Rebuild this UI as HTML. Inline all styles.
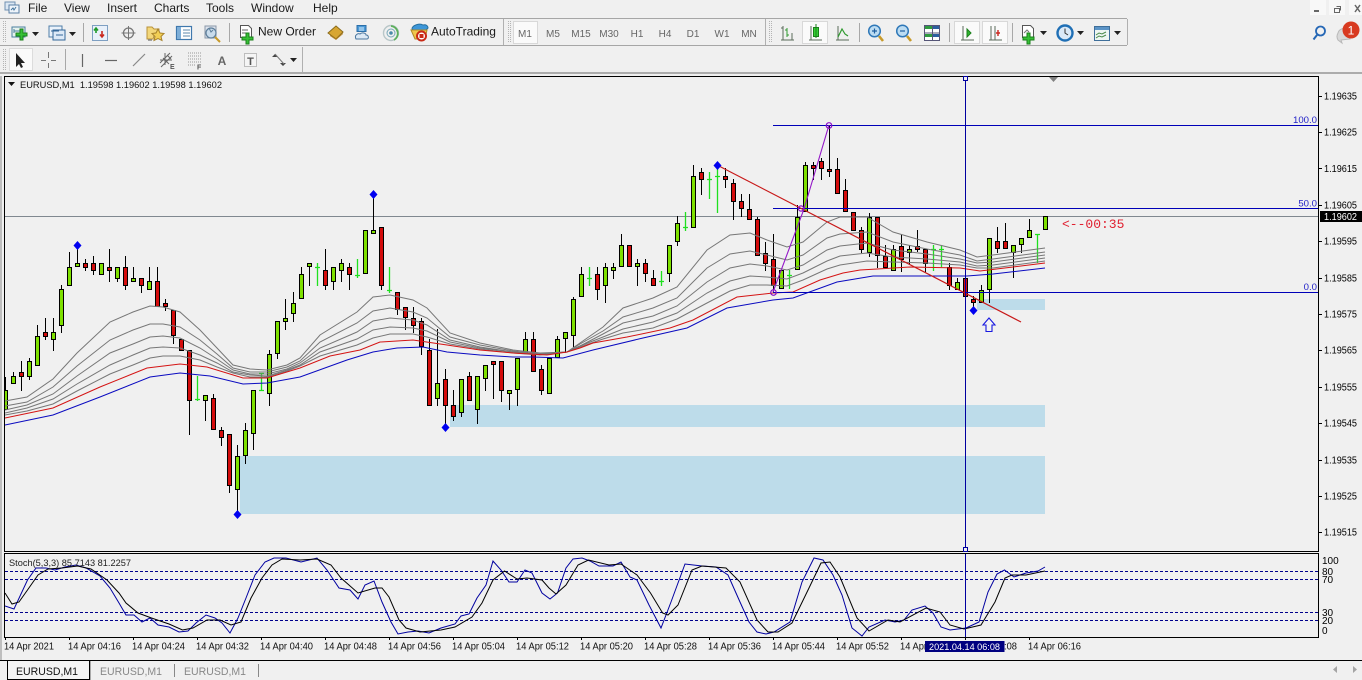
<!DOCTYPE html>
<html lang="en"><head><meta charset="utf-8"><title>EURUSD,M1</title>
<style>
html,body{margin:0;padding:0;background:#f0f0f0;width:1362px;height:680px;overflow:hidden}
svg{display:block}
text{font-family:"Liberation Sans",sans-serif;}
.menu{font-size:12px;fill:#1a1a1a}
.tf{font-size:10px;fill:#666;text-anchor:middle}
.p{font-size:10px;fill:#000}
.t{font-size:10px;fill:#111}
.lv{font-size:10px;fill:#000}
.fib{font-size:9.6px;fill:#2222c8;text-anchor:end}
</style></head><body>
<svg width="1362" height="680" viewBox="0 0 1362 680" xmlns="http://www.w3.org/2000/svg">
<defs><clipPath id="c"><rect x="5" y="77" width="1313" height="474"/></clipPath><clipPath id="s"><rect x="5" y="554" width="1313" height="83"/></clipPath></defs>
<rect width="1362" height="680" fill="#f0f0f0"/>

<!-- menu -->
<g fill="none"><rect x="5" y="2" width="10" height="8" fill="#dbe7f3" stroke="#6f8fb0"/><rect x="9" y="5" width="10" height="8" fill="#eef4fa" stroke="#5b7fa5"/><path d="M11 10l2-2 1 2 2-3" stroke="#46769f"/></g>
<text class="menu" x="28" y="12">File</text><text class="menu" x="64" y="12">View</text><text class="menu" x="107" y="12">Insert</text><text class="menu" x="154" y="12">Charts</text><text class="menu" x="206" y="12">Tools</text><text class="menu" x="251" y="12">Window</text><text class="menu" x="313" y="12">Help</text>
<!-- window controls -->
<rect x="1310" y="0" width="16" height="15" fill="#f8f8f8"/><rect x="1329" y="0" width="16" height="15" fill="#f8f8f8"/><rect x="1349" y="0" width="13" height="15" fill="#f8f8f8"/>
<path d="M1314 11h5" stroke="#666" stroke-width="2"/><path d="M1334.500 8.500h5v4h-5zM1336.500 6.500h4v4" fill="none" stroke="#666"/><path d="M1355 5l5 7m0-7l-5 7" stroke="#666" stroke-width="1.500"/>

<!-- toolbar structure -->
<path d="M0 18.500H1127M0 45.500H1127" stroke="#a6a6a6"/>
<path d="M503.500 19V45M765.500 19V45M1127.500 19V45M302.500 47V72" stroke="#b0b0b0"/>
<path d="M0 73H1362" stroke="#969696" stroke-width="1.600"/>
<g stroke="#b4b4b4" stroke-dasharray="1 1"><path d="M3.500 21V43M5.500 21V43M508.500 21V43M510.500 21V43M769.500 21V43M771.500 21V43M3.500 49V70M5.500 49V70"/></g>
<path d="M83.500 23V42M229.500 23V42M859.500 23V42M949.500 23V42M1012.500 23V42M65.500 49V70" stroke="#a8a8a8"/>

<!-- row1 left -->
<rect x="12" y="27" width="13" height="10" fill="#e6f2ee" stroke="#4a7f9f"/><path d="M14.500 31h8M14 29v4M23 29v4" stroke="#4a7f9f" fill="none"/>
<path d="M20 29h3v4h4v3h-4v4h-3v-4h-4v-3h4z" fill="#35c135" stroke="#1a7f1a"/>
<path d="M32 32h7l-3.500 4z" fill="#222"/>
<rect x="49" y="26" width="13" height="11" fill="#eaf2fb" stroke="#4f7ea8"/><rect x="53" y="30" width="12" height="10" fill="#dce9f7" stroke="#35689a"/><path d="M51 31h8M56 35h7" stroke="#35689a"/>
<path d="M69 32h7l-3.500 4z" fill="#222"/>
<rect x="92.500" y="25.500" width="15" height="15" fill="#e8f0fa" stroke="#7e9fc2"/><path d="M96 33v-4m-2 1.500l2-2.500 2 2.500" stroke="#1f9a2a" stroke-width="1.600" fill="none"/><path d="M102 31v5m-2-1.500l2 2.500 2-2.500" stroke="#c9281f" stroke-width="1.600" fill="none"/>
<circle cx="128.500" cy="33" r="5" fill="none" stroke="#777" stroke-width="1.300"/><path d="M128.500 26v14M121.500 33h14" stroke="#777"/>
<path d="M147 27h5l2 2h5v4h-4l-2 6h-6z" fill="#f3d77a" stroke="#b8923a"/><path d="M158 29l2 4 4 .5-3 3 1 4-4-2-4 2 1-4-3-3 4-.5z" fill="#f2cf55" stroke="#a8822a"/><path d="M149 39v2m2-2v2" stroke="#555"/>
<rect x="176.500" y="26.500" width="15" height="13" fill="#fff" stroke="#3f78ad" stroke-width="1.200"/><path d="M177 27h4v12h-4z" fill="#7daed8"/><path d="M183 30h7M183 33h7M183 36h7" stroke="#5d88ad"/>
<rect x="205" y="26" width="11" height="12" fill="#dde3ec" stroke="#8a97a8"/><circle cx="211" cy="33" r="5" fill="#c9dcec" stroke="#5f7f9b" stroke-width="1.200"/><path d="M215 37l5 5" stroke="#c79a2a" stroke-width="2"/><path d="M209 28l2 4 2-2" stroke="#5f7f9b" fill="none"/>

<path d="M240.500 25.500h8l3 3v9h-11z" fill="#fff" stroke="#555"/><path d="M242 30h6M242 33h7" stroke="#666"/>
<path d="M246 33h3v4h4v3h-4v4h-3v-4h-4v-3h4z" fill="#35c135" stroke="#1a7f1a"/>
<text x="258" y="35.500" font-size="12" fill="#1a1a1a">New Order</text>
<path d="M328 33l8-7 7 6-7 7z" fill="#d8a632" stroke="#8a6b1b"/><path d="M330 35l6 4 7-6v1l-7 6-6-4z" fill="#b9852a"/>
<path d="M357 25.500h9v6h-9z" fill="#4b9ad8" stroke="#2b6ea8"/><path d="M359 28h5M359 30h5" stroke="#d8ecfa"/><path d="M356 39c-2-4 2-6 4-5 2-2 6-1 6 1 3 0 3 4 1 4z" fill="#dce9f5" stroke="#4c78a0"/>
<circle cx="391" cy="33" r="7.500" fill="none" stroke="#b8c6c8" stroke-width="1.400"/><path d="M391 26a7.500 7.500 0 0 1 3 14" fill="none" stroke="#5cb05c" stroke-width="1.800"/><circle cx="391" cy="33" r="4" fill="none" stroke="#78a8b8"/><circle cx="391" cy="33" r="1.800" fill="#4a8aa8"/>
<path d="M412 29c0-4 8-6 11-4 3-1 5 1 5 3l-3 3h-10z" fill="#3d97d9" stroke="#27709f"/><path d="M411 30l16 0-2 9h-10z" fill="#f0c54a" stroke="#b08a28"/><circle cx="421.500" cy="36" r="4.500" fill="#fff" stroke="#c92a16" stroke-width="2"/><rect x="419.500" y="34" width="4" height="4" fill="#c92a16"/>
<text x="431" y="35.500" font-size="12" fill="#1a1a1a">AutoTrading</text>

<!-- timeframe -->
<rect x="513.500" y="21.500" width="24" height="22" fill="#fafafa" stroke="#d8d8d8"/>
<text class="tf" x="525" y="37">M1</text><text class="tf" x="553" y="37">M5</text><text class="tf" x="581" y="37">M15</text><text class="tf" x="609" y="37">M30</text><text class="tf" x="637" y="37">H1</text><text class="tf" x="665" y="37">H4</text><text class="tf" x="693" y="37">D1</text><text class="tf" x="722" y="37">W1</text><text class="tf" x="749" y="37">MN</text>

<!-- chart group -->
<rect x="802.500" y="21.500" width="25" height="22" fill="#fafafa" stroke="#d8d8d8"/><rect x="954.500" y="21.500" width="25" height="22" fill="#fafafa" stroke="#d8d8d8"/><rect x="982.500" y="21.500" width="25" height="22" fill="#fafafa" stroke="#d8d8d8"/>
<g fill="none" stroke="#5a6b5a"><path d="M781 40h13M783 26v14M781 28h2M792 40V33"/></g><path d="M787 28v9M785 30h2M787 35h2" stroke="#2f9a2f" fill="none"/>
<g fill="none" stroke="#5a6b5a"><path d="M809 40h13M811 26v14"/></g><rect x="813.500" y="27.500" width="5" height="9" fill="#35d035" stroke="#1a7f1a"/><path d="M816 24v14" stroke="#1a7f1a"/>
<g fill="none"><path d="M836 40h13M838 26v14" stroke="#5a6b5a"/><path d="M838 37l4-8 3 5 3 2" stroke="#2f9a2f" stroke-width="1.200"/></g>
<circle cx="874.500" cy="31" r="5.800" fill="#bcdcf2" stroke="#2f78b8" stroke-width="1.500"/><path d="M872 31h5M874.500 28.500v5" stroke="#1f5f9f" stroke-width="1.200"/><path d="M879 36l4 5" stroke="#c79a2a" stroke-width="2.600"/>
<circle cx="902.500" cy="31" r="5.800" fill="#bcdcf2" stroke="#2f78b8" stroke-width="1.500"/><path d="M900 31h5" stroke="#1f5f9f" stroke-width="1.200"/><path d="M907 36l4 5" stroke="#c79a2a" stroke-width="2.600"/>
<rect x="924.500" y="25.500" width="15" height="15" fill="#fff" stroke="#557"/><rect x="925" y="26" width="7" height="3" fill="#2f9a3f"/><rect x="933" y="26" width="6" height="3" fill="#2c5f9f"/><rect x="925" y="34" width="7" height="3" fill="#2f9a3f"/><rect x="933" y="34" width="6" height="3" fill="#2c5f9f"/><path d="M932.500 26v14M925 33h14" stroke="#557"/>
<g fill="none" stroke="#5a6b5a"><path d="M961 40h13M963 26v14"/></g><path d="M967 29l4 4-4 4z" fill="#2fb52f" stroke="#1a7f1a"/>
<g fill="none" stroke="#5a6b5a"><path d="M989 40h13M991 26v14M995 26v14"/></g><path d="M996 33h4M998 30v6" stroke="#c9281f" stroke-width="1.400"/>
<path d="M1022.500 25.500h8l3 3v9h-11z" fill="#fff" stroke="#555"/><path d="M1024 33l3-3 2 2" stroke="#777" fill="none"/>
<path d="M1027 33h3v4h4v3h-4v4h-3v-4h-4v-3h4z" fill="#35c135" stroke="#1a7f1a"/>
<path d="M1040 31h7l-3.500 4z" fill="#222"/>
<circle cx="1065" cy="33" r="7.500" fill="#dbe9f7" stroke="#1f6fb5" stroke-width="2.400"/><path d="M1065 28.500v4.500l3 2" stroke="#333" fill="none"/>
<path d="M1077 31h7l-3.500 4z" fill="#222"/>
<rect x="1094.500" y="26.500" width="15" height="14" fill="#eef6f2" stroke="#3f6f9a"/><rect x="1095" y="27" width="14" height="3" fill="#5b94c7"/><path d="M1096 35l3-2 3 1 4-2M1096 38l3-2 3 1 4-2" stroke="#4a8a4a" fill="none"/>
<path d="M1114 31h7l-3.500 4z" fill="#222"/>
<circle cx="1320.500" cy="31" r="4.500" fill="none" stroke="#2567b5" stroke-width="1.800"/><path d="M1317 35l-3.500 4.500" stroke="#2567b5" stroke-width="2"/>
<path d="M1338 33a6 6 0 0 1 8-4l4 10-9 1 1 3-4-3a7 7 0 0 1 0-7z" fill="#d9d9d9" stroke="#b8b8b8"/>
<circle cx="1351" cy="30" r="8.500" fill="#d83a20"/><text x="1351" y="34.500" font-size="12" fill="#fff" text-anchor="middle">1</text>

<!-- row 2 -->
<rect x="9.500" y="48.500" width="23" height="22" fill="#fafafa" stroke="#dcdcdc"/>
<path d="M16 53v14l3-3 2 4 2-1-2-4h4z" fill="#222"/>
<path d="M48.500 52v6M48.500 63v5M41 60.500h5M51 60.500h5" stroke="#777"/>
<path d="M82.500 54v13" stroke="#666" stroke-width="1.200"/>
<path d="M105 60.500h12" stroke="#666" stroke-width="1.200"/>
<path d="M133 66l12-12" stroke="#888" stroke-width="1.200"/>
<path d="M160 63l10-10M161 67l11-11M163 58l6 6M167 55l4 4M165 53v12M160 60h12" stroke="#666" fill="none"/><text x="170" y="69" font-size="7" font-weight="bold" fill="#555">E</text>
<path d="M188 53h13M188 56h13M188 59h13M188 62h13M188 65h8" stroke="#999" stroke-dasharray="1 1"/><text x="197" y="69.500" font-size="7" font-weight="bold" fill="#555">F</text>
<text x="222" y="65" font-size="12" font-weight="bold" fill="#666" text-anchor="middle">A</text>
<rect x="244.500" y="53.500" width="12" height="13" fill="#f5f5f5" stroke="#888" stroke-dasharray="1 1"/><text x="250.500" y="65" font-size="11" font-weight="bold" fill="#555" text-anchor="middle">T</text>
<path d="M272 57l3-3 3 3zM280 63l3 3 3-3z" fill="#444"/><path d="M275 54l9 10" stroke="#777"/><path d="M290 58h7l-3.500 4z" fill="#222"/>

<!-- chart frame -->
<path d="M1 76V660" stroke="#a8a8a8" stroke-width="1.400"/>
<rect x="4.500" y="76.500" width="1314" height="475" fill="#f0f0f0" stroke="#000"/>
<rect x="4.500" y="553.500" width="1314" height="84" fill="#f0f0f0" stroke="#000"/>

<g clip-path="url(#c)">
<!-- zones -->
<rect x="240" y="456" width="805" height="58" fill="#bddcea"/>
<rect x="450" y="405" width="595" height="22" fill="#bddcea"/>
<rect x="977" y="299" width="68" height="11" fill="#bddcea"/>
<!-- price line -->
<path d="M5 216.500H1318" stroke="#808890"/>

<!-- wicks -->
<path stroke="#000" fill="none" d="M5.500 377V410M13.500 372V376M21.500 361V391M29.500 358V380M37.500 325V336M45.500 318V340M53.500 318V351M61.500 285V333M69.500 252V267M77.500 245V263M85.500 259V271M93.500 256V275M109.500 249V282M117.500 279V282M125.500 256V290M133.500 267V278M141.500 286V293M149.500 267V281M157.500 267V281M165.500 299V311M173.500 336V344M189.500 401V435M205.500 401V421M213.500 394V398M221.500 427V446M229.500 486V493M237.500 445V513M245.500 423V464M253.500 434V450M269.500 350V406M277.500 354V359M285.500 299V330M293.500 292V322M301.500 267V274M309.500 267V286M325.500 249V290M333.500 282V290M341.500 259V282M349.500 263V290M373.500 195V230M381.500 286V290M397.500 310V315M405.500 318V330M413.500 307V333M421.500 318V355M429.500 339V350M437.500 329V406M445.500 369V427M453.500 390V421M461.500 413V417M469.500 372V376M477.500 410V424M485.500 379V391M493.500 365V399M501.500 391V402M509.500 394V410M517.500 390V406M525.500 332V339M533.500 332V339M541.500 365V395M557.500 336V339M565.500 339V353M573.500 297V347M581.500 267V274M597.500 267V300M605.500 263V303M613.500 263V279M621.500 234V245M637.500 259V286M645.500 259V282M653.500 270V278M669.500 274V282M677.500 216V246M693.500 165V176M701.500 168V195M725.500 168V188M733.500 179V220M741.500 194V217M749.500 194V209M757.500 217V219M765.500 242V271M773.500 234V293M797.500 205V217M805.500 162V165M813.500 162V180M821.500 158V180M829.500 125V177M837.500 158V169M845.500 179V190M861.500 227V253M869.500 213V257M877.500 256V268M885.500 245V256M893.500 245V249M901.500 234V272M909.500 245V264M917.500 230V252M925.500 264V272M949.500 263V290M957.500 278V282M973.500 296V310M981.500 285V290M989.500 290V303M997.500 227V253M1005.500 223V241M1013.500 253V278M1021.500 245V253M1029.500 219V230"/>
<!-- doji bright -->
<path stroke="#1fe01f" stroke-width="1.300" fill="none" d="M197.500 376V401M195 399.500h5M261.500 373V390M259 373.500h5M259 390.500h5M317.500 263V286M315 267.500h5M357.500 259V278M355 275.500h5M389.500 267V293M387 290.500h5M589.500 267V286M587 278.500h5M661.500 271V286M659 281.500h5M685.500 212V231M683 227.500h5M709.500 172V199M707 179.500h5M717.500 165V213M715 176.500h5M789.500 270V289M787 275.500h5M933.500 245V271M931 249.500h5M941.500 245V267M939 249.500h5M1037.500 234V263M1035 234.500h5"/>
<!-- green bodies -->
<path fill="#7ee000" stroke="#000" d="M3.500 390.500h4V409.500h-4zM11.500 376.500h4V383.500h-4zM27.500 361.500h4V376.500h-4zM35.500 336.500h4V365.500h-4zM51.500 332.500h4V339.500h-4zM59.500 289.500h4V325.500h-4zM67.500 267.500h4V285.500h-4zM75.500 263.500h4V266.500h-4zM99.500 263.500h4V274.500h-4zM115.500 267.500h4V278.500h-4zM131.500 278.500h4V281.500h-4zM147.500 281.500h4V289.500h-4zM203.500 395.500h4V400.500h-4zM235.500 456.500h4V489.500h-4zM243.500 430.500h4V455.500h-4zM251.500 390.500h4V433.500h-4zM267.500 354.500h4V393.500h-4zM275.500 321.500h4V353.500h-4zM283.500 318.500h4V321.500h-4zM291.500 303.500h4V313.500h-4zM299.500 274.500h4V298.500h-4zM307.500 263.500h4V266.500h-4zM331.500 267.500h4V281.500h-4zM339.500 263.500h4V270.500h-4zM363.500 230.500h4V273.500h-4zM371.500 230.500h4V233.500h-4zM435.500 383.500h4V398.500h-4zM459.500 379.500h4V412.500h-4zM475.500 376.500h4V409.500h-4zM483.500 365.500h4V378.500h-4zM507.500 390.500h4V393.500h-4zM515.500 358.500h4V389.500h-4zM523.500 339.500h4V353.500h-4zM547.500 358.500h4V393.500h-4zM555.500 339.500h4V357.500h-4zM563.500 332.500h4V338.500h-4zM571.500 299.500h4V335.500h-4zM579.500 274.500h4V296.500h-4zM603.500 267.500h4V285.500h-4zM611.500 267.500h4V270.500h-4zM619.500 245.500h4V266.500h-4zM635.500 263.500h4V266.500h-4zM667.500 245.500h4V273.500h-4zM675.500 223.500h4V241.500h-4zM691.500 176.500h4V227.500h-4zM779.500 270.500h4V288.500h-4zM795.500 217.500h4V269.500h-4zM803.500 165.500h4V211.500h-4zM867.500 217.500h4V252.500h-4zM891.500 249.500h4V270.500h-4zM907.500 249.500h4V252.500h-4zM955.500 282.500h4V289.500h-4zM979.500 290.500h4V302.500h-4zM987.500 238.500h4V289.500h-4zM1011.500 245.500h4V252.500h-4zM1019.500 238.500h4V244.500h-4zM1027.500 230.500h4V237.500h-4zM1043.500 216.500h4V229.500h-4z"/>
<!-- red bodies -->
<path fill="#d40c0c" stroke="#000" d="M19.500 372.500h4V376.500h-4zM43.500 332.500h4V336.500h-4zM83.500 263.500h4V267.500h-4zM91.500 263.500h4V270.500h-4zM107.500 267.500h4V270.500h-4zM123.500 267.500h4V285.500h-4zM139.500 278.500h4V285.500h-4zM155.500 281.500h4V306.500h-4zM163.500 303.500h4V306.500h-4zM171.500 310.500h4V335.500h-4zM179.500 339.500h4V350.500h-4zM187.500 350.500h4V400.500h-4zM211.500 398.500h4V429.500h-4zM219.500 430.500h4V437.500h-4zM227.500 434.500h4V485.500h-4zM323.500 270.500h4V285.500h-4zM347.500 267.500h4V274.500h-4zM379.500 227.500h4V285.500h-4zM395.500 292.500h4V309.500h-4zM403.500 307.500h4V317.500h-4zM411.500 318.500h4V325.500h-4zM419.500 321.500h4V346.500h-4zM427.500 350.500h4V405.500h-4zM443.500 379.500h4V405.500h-4zM451.500 405.500h4V416.500h-4zM467.500 376.500h4V400.500h-4zM491.500 361.500h4V364.500h-4zM499.500 361.500h4V390.500h-4zM531.500 339.500h4V371.500h-4zM539.500 369.500h4V390.500h-4zM595.500 274.500h4V289.500h-4zM627.500 245.500h4V266.500h-4zM643.500 263.500h4V273.500h-4zM651.500 278.500h4V285.500h-4zM699.500 172.500h4V179.500h-4zM723.500 176.500h4V179.500h-4zM731.500 183.500h4V201.500h-4zM739.500 201.500h4V208.500h-4zM747.500 209.500h4V219.500h-4zM755.500 219.500h4V255.500h-4zM763.500 253.500h4V263.500h-4zM771.500 259.500h4V285.500h-4zM811.500 165.500h4V168.500h-4zM819.500 161.500h4V168.500h-4zM827.500 169.500h4V171.500h-4zM835.500 169.500h4V193.500h-4zM843.500 190.500h4V211.500h-4zM851.500 212.500h4V230.500h-4zM859.500 230.500h4V249.500h-4zM875.500 217.500h4V255.500h-4zM883.500 256.500h4V267.500h-4zM899.500 246.500h4V259.500h-4zM915.500 246.500h4V249.500h-4zM923.500 249.500h4V263.500h-4zM947.500 267.500h4V285.500h-4zM963.500 278.500h4V296.500h-4zM971.500 299.500h4V302.500h-4zM995.500 241.500h4V248.500h-4zM1003.500 241.500h4V248.500h-4z"/>

<!-- gray MAs -->
<g fill="none" stroke="#777" stroke-width="1">
<polyline points="5,401 27,397 53,379 77,353 110,322 133,312 150,306 163,307 180,312 200,330 217,348 233,365 250,369 267,370 287,365 300,358 320,335 357,312 373,297 390,295 413,300 427,308 450,333 480,343 513,350 540,353 567,352 580,343 603,327 623,308 653,298 677,287 707,250 730,235 750,233 767,240 787,247 803,242 827,222 840,217 867,217 893,232 927,242 960,250 977,257 993,255 1045,248"/>
<polyline points="5,406 27,402 53,387 77,366 110,340 133,330 150,324 163,324 180,327 200,340 217,354 233,368 250,372 267,372 287,367 300,361 320,342 357,323 373,311 390,308 413,312 427,318 450,337 480,345 513,351 540,354 567,352 580,344 603,331 623,317 653,308 677,298 707,268 730,254 750,251 767,255 787,260 803,255 827,238 840,234 867,232 893,242 927,249 960,255 977,261 993,259 1045,252"/>
<polyline points="5,410 27,405 53,394 77,376 110,353 133,344 150,337 163,336 180,338 200,348 217,359 233,370 250,374 267,374 287,369 300,363 320,348 357,332 373,321 390,318 413,320 427,325 450,340 480,347 513,352 540,354 567,352 580,346 603,334 623,323 653,316 677,306 707,282 730,268 750,264 767,266 787,270 803,265 827,250 840,246 867,243 893,250 927,254 960,259 977,263 993,262 1045,255"/>
<polyline points="5,413 27,408 53,399 77,384 110,365 133,355 150,348 163,347 180,348 200,355 217,363 233,372 250,375 267,376 287,370 300,365 320,352 357,339 373,330 390,327 413,328 427,331 450,342 480,348 513,352 540,354 567,352 580,346 603,337 623,329 653,322 677,313 707,293 730,281 750,276 767,277 787,279 803,273 827,261 840,256 867,253 893,257 927,259 960,262 977,266 993,265 1045,258"/>
<polyline points="5,415 27,411 53,404 77,391 110,374 133,365 150,358 163,356 180,356 200,360 217,367 233,373 250,377 267,377 287,371 300,366 320,356 357,345 373,338 390,334 413,334 427,337 450,344 480,349 513,353 540,355 567,352 580,347 603,339 623,333 653,328 677,319 707,303 730,291 750,285 767,285 787,286 803,280 827,269 840,265 867,261 893,262 927,263 960,265 977,268 993,268 1045,261"/>
</g>
<polyline fill="none" stroke="#d41414" points="5,418 53,408 100,387 147,368 180,364 207,367 243,378 267,378 300,368 330,356 360,350 380,342 413,340 447,345 480,350 513,353 547,355 567,352 580,348 593,343 627,337 670,328 693,320 737,297 773,293 793,292 820,280 843,273 860,270 910,267 960,268 980,271 1013,267 1045,263"/>
<polyline fill="none" stroke="#0a0ac0" points="5,425 53,415 100,397 150,377 180,373 210,376 243,384 267,383 300,377 347,360 373,352 397,348 423,347 447,352 480,355 513,357 533,357 563,358 593,350 643,338 687,328 727,308 773,300 793,298 837,282 873,276 927,276 967,276 993,274 1045,268"/>

<!-- fibo -->
<path stroke="#0000b8" d="M773 125.500H1318M773 208.500H1318M773 292.500H1318"/>
<text class="fib" x="1317" y="123">100.0</text><text class="fib" x="1317" y="206.500">50.0</text><text class="fib" x="1317" y="290">0.0</text>
<!-- trend -->
<path d="M717 165L1021 322" stroke="#c81818" stroke-width="1.200" fill="none"/>
<path d="M773 292L804 209L829 125" stroke="#9418c8" stroke-width="1.100" fill="none"/>
<g fill="none" stroke="#8a10c8" stroke-width="1.200"><circle cx="773.500" cy="292.500" r="2.800"/><circle cx="801" cy="208.500" r="2.600"/><circle cx="829" cy="125.500" r="2.800"/></g>
<!-- diamonds -->
<path fill="#0000f0" d="M77.500 241l4 4.500-4 4.500-4-4.500zM373.500 190l4 4.500-4 4.500-4-4.500zM237.500 510l4 4.500-4 4.500-4-4.500zM445.500 423l4 4.500-4 4.500-4-4.500zM717.500 161l4 4.500-4 4.500-4-4.500zM973.500 306l4 4.500-4 4.500-4-4.500z"/>
<!-- arrow -->
<path d="M989 318l6 7h-3v6.500h-6V325h-3z" fill="#f4f4f4" stroke="#1818e0" stroke-width="1.100"/>
<!-- marker -->
<path d="M1049 77h9l-4.500 5z" fill="#808080"/>
<text x="1062" y="228" font-size="13" fill="#e02030" style="font-family:'Liberation Mono',monospace">&lt;--00:35</text>
<path d="M8 82h7l-3.500 4z" fill="#111"/>
<text x="20" y="88" font-size="9.600" fill="#111" textLength="202" lengthAdjust="spacingAndGlyphs">EURUSD,M1&#160;&#160;1.19598 1.19602 1.19598 1.19602</text>
</g>
<!-- crosshair main -->
<path d="M965.500 78V551" stroke="#0000a0"/>
<rect x="963.500" y="76.500" width="4" height="4" fill="#f0f0f0" stroke="#0000a0"/>
<rect x="963.500" y="547.500" width="4" height="4" fill="#f0f0f0" stroke="#0000a0"/>

<!-- stoch -->
<g clip-path="url(#s)">
<path stroke="#00008b" stroke-dasharray="3 2" d="M5 571.500H1318M5 579.500H1318M5 612.500H1318M5 620.500H1318"/>
<polyline fill="none" stroke="#0000a0" points="5,606 14,609 27.500,580 36,568 46,568 55,570 65,567 76,565 86,568 100,576 110,588 119,603 126,615 134,615 142,622 150,618 158,625 169,627 179,632 188,631 196,623 206,615 215,618 222,623 230,633 238,618 246,598 255,575 265,562 274,558 286,558 301,562 317,558 327,570 339,588 350,590 358,599 365,585 374,581 382,602 391,622 398,634 408,632 418,631 429,633 441,628 455,624 461,616 469,614 477,598 486,585 493,561 501,570 509,582 517,582 525,570 532,573 542,593 550,599 557.500,593 566,568 573,559 582,558 590,561 599,566 613,566 621,562 630,577 637,580 649,605 661,628 671,602 685,564 702,566 716,567 728,575 740,602 749,622 757,632 766,634 774,632 790,622 802,582 814,558 823,560 833,575 842,595 852,628 862,636 869,627 885,620 895,622 904,620 912,610 925,606 933,613 941,627 950,630 966,628 979,622 988,592 997,574 1004.500,570 1014,577 1026,573 1038,571 1045,567"/>
<polyline fill="none" stroke="#000" points="5,593 12,604 19,602 27.500,590 38,575 48,569 62,568 77.500,566 91,569 107,580 119,593 126,603 138,613 151.500,618 169,624 182.500,630 193,628 207,620 220,620 231,625 241,622 251,598 262,578 272,565 282,559 300,560 317,559 331,565 341,578 358,593 375,588 382,588 389,597 399,620 406,628 420,632 441,630 455,627 472,617 482,603 493,580 504.500,571 517,579 527,578 542,580 549,588 556,594 566,585 578,565 588.500,560 609,565 621,564 637,575 650.500,593 662.600,613 668,615 678,605 692,570 702,566 726,568 740,582 757,620 768,632 778,632 792,623 809,588 821,563 830,562 840,577 857,618 869,631 888,620 900,622 926,608 940,612 950,625 964,629 981,625 995,602 1005,578 1012,575 1026,575 1045,571"/>
<text x="9" y="566" font-size="9.600" fill="#222" textLength="122" lengthAdjust="spacingAndGlyphs">Stoch(5,3,3) 85.7143 81.2257</text>
</g>
<path d="M965.500 554V637" stroke="#0000a0"/>

<!-- price axis -->
<path stroke="#000" d="M1319 96.500h3M1319 132.500h3M1319 168.500h3M1319 205.500h3M1319 241.500h3M1319 278.500h3M1319 314.500h3M1319 350.500h3M1319 387.500h3M1319 423.500h3M1319 460.500h3M1319 496.500h3M1319 532.500h3"/>
<g transform="translate(0,-0.5)"><text class="p" x="1324" y="100" textLength="33" lengthAdjust="spacingAndGlyphs">1.19635</text><text class="p" x="1324" y="136" textLength="33" lengthAdjust="spacingAndGlyphs">1.19625</text><text class="p" x="1324" y="172.500" textLength="33" lengthAdjust="spacingAndGlyphs">1.19615</text><text class="p" x="1324" y="209" textLength="33" lengthAdjust="spacingAndGlyphs">1.19605</text><text class="p" x="1324" y="245" textLength="33" lengthAdjust="spacingAndGlyphs">1.19595</text><text class="p" x="1324" y="282" textLength="33" lengthAdjust="spacingAndGlyphs">1.19585</text><text class="p" x="1324" y="318" textLength="33" lengthAdjust="spacingAndGlyphs">1.19575</text><text class="p" x="1324" y="354" textLength="33" lengthAdjust="spacingAndGlyphs">1.19565</text><text class="p" x="1324" y="391" textLength="33" lengthAdjust="spacingAndGlyphs">1.19555</text><text class="p" x="1324" y="427" textLength="33" lengthAdjust="spacingAndGlyphs">1.19545</text><text class="p" x="1324" y="464" textLength="33" lengthAdjust="spacingAndGlyphs">1.19535</text><text class="p" x="1324" y="500" textLength="33" lengthAdjust="spacingAndGlyphs">1.19525</text><text class="p" x="1324" y="536" textLength="33" lengthAdjust="spacingAndGlyphs">1.19515</text></g>
<rect x="1320" y="211" width="42" height="11" fill="#000"/>
<text x="1324" y="220" font-size="10" fill="#fff" textLength="33" lengthAdjust="spacingAndGlyphs">1.19602</text>
<!-- stoch axis -->
<text class="lv" x="1322" y="564">100</text><text class="lv" x="1322" y="575">80</text><text class="lv" x="1322" y="583">70</text><text class="lv" x="1322" y="616">30</text><text class="lv" x="1322" y="624">20</text><text class="lv" x="1322" y="634">0</text>

<!-- time axis -->
<path stroke="#000" d="M5.500 637v3M69.500 637v3M133.500 637v3M197.500 637v3M261.500 637v3M325.500 637v3M389.500 637v3M453.500 637v3M517.500 637v3M581.500 637v3M645.500 637v3M709.500 637v3M773.500 637v3M837.500 637v3M901.500 637v3M965.500 637v3M1029.500 637v3"/>
<g transform="translate(0,-0.5)"><text class="t" x="4" y="650" textLength="50" lengthAdjust="spacingAndGlyphs">14 Apr 2021</text><text class="t" x="68" y="650" textLength="53" lengthAdjust="spacingAndGlyphs">14 Apr 04:16</text><text class="t" x="132" y="650" textLength="53" lengthAdjust="spacingAndGlyphs">14 Apr 04:24</text><text class="t" x="196" y="650" textLength="53" lengthAdjust="spacingAndGlyphs">14 Apr 04:32</text><text class="t" x="260" y="650" textLength="53" lengthAdjust="spacingAndGlyphs">14 Apr 04:40</text><text class="t" x="324" y="650" textLength="53" lengthAdjust="spacingAndGlyphs">14 Apr 04:48</text><text class="t" x="388" y="650" textLength="53" lengthAdjust="spacingAndGlyphs">14 Apr 04:56</text><text class="t" x="452" y="650" textLength="53" lengthAdjust="spacingAndGlyphs">14 Apr 05:04</text><text class="t" x="516" y="650" textLength="53" lengthAdjust="spacingAndGlyphs">14 Apr 05:12</text><text class="t" x="580" y="650" textLength="53" lengthAdjust="spacingAndGlyphs">14 Apr 05:20</text><text class="t" x="644" y="650" textLength="53" lengthAdjust="spacingAndGlyphs">14 Apr 05:28</text><text class="t" x="708" y="650" textLength="53" lengthAdjust="spacingAndGlyphs">14 Apr 05:36</text><text class="t" x="772" y="650" textLength="53" lengthAdjust="spacingAndGlyphs">14 Apr 05:44</text><text class="t" x="836" y="650" textLength="53" lengthAdjust="spacingAndGlyphs">14 Apr 05:52</text><text class="t" x="900" y="650" textLength="53" lengthAdjust="spacingAndGlyphs">14 Apr 06:00</text><text class="t" x="964" y="650" textLength="53" lengthAdjust="spacingAndGlyphs">14 Apr 06:08</text><text class="t" x="1028" y="650" textLength="53" lengthAdjust="spacingAndGlyphs">14 Apr 06:16</text></g>
<rect x="925" y="641" width="79.500" height="11" fill="#000080"/>
<text x="929" y="650" font-size="9.600" fill="#fff" textLength="71" lengthAdjust="spacingAndGlyphs">2021.04.14 06:08</text>

<!-- tabs -->
<path d="M0 660.500H1362" stroke="#000"/>
<path d="M7.500 661V679.500H89.500V661" fill="#f4f4f4" stroke="#000"/>
<path d="M90.500 661V680" stroke="#aaa"/>
<text x="16" y="675" font-size="11" fill="#111" textLength="62" lengthAdjust="spacingAndGlyphs">EURUSD,M1</text>
<text x="100" y="675" font-size="11" fill="#888" textLength="62" lengthAdjust="spacingAndGlyphs">EURUSD,M1</text>
<path d="M174.500 664V677M258.500 664V677" stroke="#888"/>
<text x="184" y="675" font-size="11" fill="#888" textLength="62" lengthAdjust="spacingAndGlyphs">EURUSD,M1</text>
<path d="M1337 666v7l-4-3.500zM1353 666v7l4-3.500z" fill="#a4a4a4"/>
</svg>
</body></html>
